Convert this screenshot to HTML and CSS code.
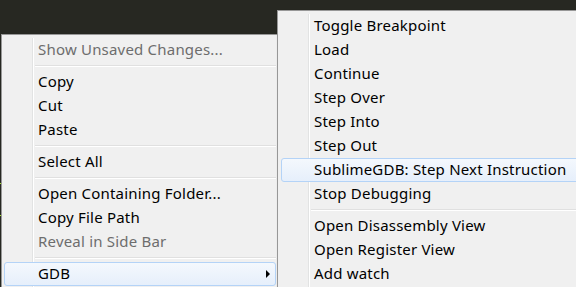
FILE: index.html
```html
<!DOCTYPE html>
<html lang="en">
<head>
    <meta charset="UTF-8">
    <title>Context Menu</title>
    <link rel="stylesheet" href="styles.css">
</head>
<body>

    <div class="editor">
        <span class="mark mark-one"></span>
        <span class="mark mark-two"></span>
    </div>

    <!-- main context menu -->
    <ul class="menu main-menu">
        <li class="item disabled">Show Unsaved Changes...</li>
        <li class="sep"></li>
        <li class="item">Copy</li>
        <li class="item">Cut</li>
        <li class="item">Paste</li>
        <li class="sep"></li>
        <li class="item">Select All</li>
        <li class="sep"></li>
        <li class="item">Open Containing Folder...</li>
        <li class="item">Copy File Path</li>
        <li class="item disabled">Reveal in Side Bar</li>
        <li class="sep"></li>
        <li class="item active has-sub">GDB</li>
    </ul>

    <!-- GDB submenu -->
    <ul class="menu sub-menu">
        <li class="item">Toggle Breakpoint</li>
        <li class="item">Load</li>
        <li class="item">Continue</li>
        <li class="item">Step Over</li>
        <li class="item">Step Into</li>
        <li class="item">Step Out</li>
        <li class="item active">SublimeGDB: Step Next Instruction</li>
        <li class="item">Stop Debugging</li>
        <li class="sep"></li>
        <li class="item">Open Disassembly View</li>
        <li class="item">Open Register View</li>
        <li class="item">Add watch</li>
    </ul>

</body>
</html>
```

FILE: styles.css
```css
body {
    margin: 0;
    width: 576px;
    height: 287px;
    overflow: hidden;
    background-color: #272822;
    font-family: "Noto Sans", "Open Sans", sans-serif;
    font-size: 15px;
    letter-spacing: 0.2px;
    position: relative;
}

.editor {
    height: 287px;
}

.mark {
    position: absolute;
    left: 0;
    width: 1px;
    height: 1px;
    background-color: #a6e22e;
}
.mark-one { top: 183px; }
.mark-two { top: 215px; }

/* menus */
.menu {
    position: absolute;
    margin: 0;
    padding: 3px 2px;
    list-style: none;
    background-color: #f0f0f0;
    border: 1px solid #979797;
    box-shadow: 2px 2px 3px rgba(0, 0, 0, 0.3);
}

.menu::before {
    content: "";
    position: absolute;
    top: 3px;
    bottom: 0;
    left: 30px;
    width: 1px;
    background-color: #e2e3e3;
    border-right: 1px solid #fff;
}

.main-menu {
    left: 1px;
    top: 34px;
    width: 272px;
}

.sub-menu {
    left: 277px;
    top: 10px;
    width: 320px;
}

.item {
    position: relative;
    height: 22px;
    line-height: 20px;
    padding-left: 33px;
    border: 1px solid transparent;
    border-radius: 3px;
    color: #000;
    white-space: nowrap;
}

.item.disabled {
    color: #6d6d6d;
}

.item.active {
    border-color: #b4d3f7;
    background: linear-gradient(#f4f8fd, #e6effb);
}

.sub-menu .item.active {
    margin-left: 1px;
    padding-left: 32px;
}

.has-sub::after {
    content: "";
    position: absolute;
    right: 5px;
    top: 7px;
    border-left: 4px solid #000;
    border-top: 4px solid transparent;
    border-bottom: 4px solid transparent;
}

.sep {
    position: relative;
    height: 8px;
}

.sep::before {
    content: "";
    position: absolute;
    left: 31px;
    right: 0;
    top: 3px;
    height: 1px;
    background-color: #e0e0e0;
    border-bottom: 1px solid #fff;
}
```
